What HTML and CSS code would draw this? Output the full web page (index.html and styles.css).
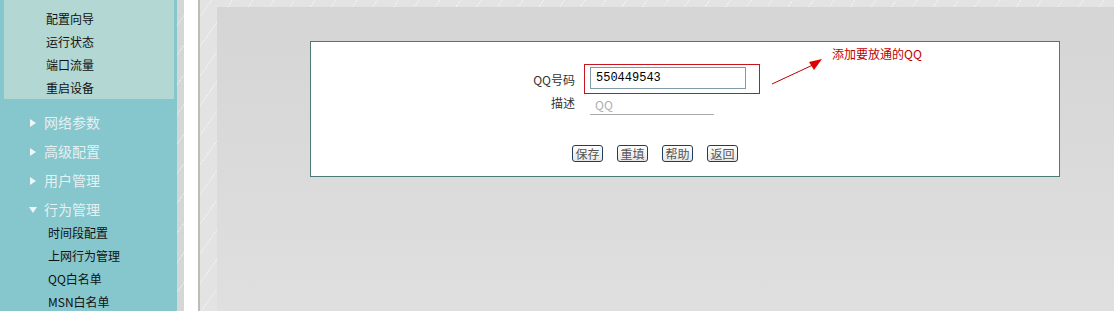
FILE: index.html
```html
<!DOCTYPE html>
<html lang="zh-CN">

<head>
    <meta charset="UTF-8">
    <title>QQ白名单</title>
    <link rel="stylesheet" href="styles.css">
</head>

<body>
    <div class="sidebar">
        <ul class="submenu boxed">
            <li>配置向导</li>
            <li>运行状态</li>
            <li>端口流量</li>
            <li>重启设备</li>
        </ul>
        <ul class="menu">
            <li><span class="arrow"></span>网络参数</li>
            <li><span class="arrow"></span>高级配置</li>
            <li><span class="arrow"></span>用户管理</li>
            <li><span class="arrow open"></span>行为管理</li>
        </ul>
        <ul class="submenu plain">
            <li>时间段配置</li>
            <li>上网行为管理</li>
            <li>QQ白名单</li>
            <li>MSN白名单</li>
        </ul>
    </div>

    <div class="divider">
        <div class="divider-gray"></div>
        <div class="divider-white"></div>
        <div class="divider-line"></div>
    </div>

    <div class="main">
        <div class="workspace">
            <div class="panel">
                <div class="form-row">
                    <label class="form-label">QQ号码</label>
                    <span class="highlight">
                        <input type="text" class="text-input" value="550449543">
                    </span>
                    <span class="note">
                        <svg class="note-arrow" width="60" height="34" viewBox="0 0 60 34">
                            <line x1="1" y1="30" x2="44" y2="10" stroke="#c00000" stroke-width="1" />
                            <polygon points="51,5 38,8 43,16" fill="#e00000" />
                        </svg>
                        <span class="note-text">添加要放通的QQ</span>
                    </span>
                </div>
                <div class="form-row second">
                    <label class="form-label">描述</label>
                    <input type="text" class="line-input" placeholder="QQ">
                </div>
                <div class="actions">
                    <button>保存</button>
                    <button>重填</button>
                    <button>帮助</button>
                    <button>返回</button>
                </div>
            </div>
        </div>
    </div>
</body>

</html>
```

FILE: styles.css
```css
body {
    margin: 0;
    display: flex;
    height: 311px;
    overflow: hidden;
    font-family: "Noto Sans CJK SC", "DejaVu Sans", sans-serif;
    font-size: 12px;
    color: #111;
    background-color: #d8d8d8;
}

ul {
    list-style: none;
    margin: 0;
    padding: 0;
}

.sidebar {
    width: 177px;
    flex-shrink: 0;
    background-color: #86c6cd;
}

.submenu li {
    line-height: 23px;
    height: 23px;
}

.submenu.boxed {
    margin-left: 4px;
    width: 170px;
    height: 99px;
    padding: 7px 0 0 42px;
    box-sizing: border-box;
    background-color: #b3d8d4;
}

.menu {
    margin-top: 9px;
}

.menu li {
    height: 29px;
    line-height: 29px;
    font-size: 14px;
    color: #e4f1f2;
    display: flex;
    align-items: center;
}

.arrow {
    width: 0;
    height: 0;
    margin-left: 30px;
    margin-right: 8px;
    border-top: 4px solid transparent;
    border-bottom: 4px solid transparent;
    border-left: 6px solid #eef7f7;
}

.arrow.open {
    margin-left: 29px;
    margin-right: 7px;
    border-left: 4px solid transparent;
    border-right: 4px solid transparent;
    border-top: 6px solid #eef7f7;
    border-bottom: none;
}

.submenu.plain {
    margin-top: -3px;
    padding-left: 48px;
}

.divider {
    display: flex;
    flex-shrink: 0;
}

.divider-gray,
.main {
    background-color: #e3e3e3;
    background-image: repeating-linear-gradient(-55deg, rgba(255, 255, 255, 0) 0 16px, rgba(255, 255, 255, 0.35) 16px 17px);
}

.divider-gray {
    width: 7px;
    background-color: #d6d6d6;
}

.divider-white {
    width: 14px;
    background-color: #fff;
}

.divider-line {
    width: 2px;
    background-color: #bdbdb6;
}

.main {
    flex: 1;
    padding: 7px 0 0 17px;
}

.workspace {
    height: 100%;
    background: linear-gradient(#d5d5d5, #dfdfdf);
    padding: 34px 54px 0 93px;
    box-sizing: border-box;
}

.panel {
    height: 136px;
    box-sizing: border-box;
    background-color: #fff;
    border: 1px solid #4c7a78;
    padding-top: 22px;
}

.form-row {
    display: flex;
    align-items: center;
    height: 30px;
}

.form-row.second {
    height: 21px;
    align-items: flex-end;
}

.form-label {
    width: 264px;
    text-align: right;
    color: #333;
    flex-shrink: 0;
    margin-right: 9px;
}

.form-row.second .form-label {
    margin-right: 15px;
    line-height: 21px;
    position: relative;
    top: -2px;
}

.highlight {
    display: inline-flex;
    border: 1px solid #c8141e;
    padding: 2px 13px 4px 5px;
}

.text-input {
    width: 156px;
    height: 22px;
    box-sizing: border-box;
    border: 1px solid #7f9aab;
    padding: 0 5px;
    font-family: "Liberation Mono", monospace;
    font-size: 12px;
    color: #000;
    outline: none;
}

.note {
    display: flex;
    align-items: flex-start;
    align-self: flex-start;
    margin-left: 11px;
    margin-top: -10px;
}

.note-text {
    color: #c00000;
    font-size: 12px;
    margin-left: 1px;
    line-height: 16px;
    margin-top: -8px;
}

.line-input {
    width: 124px;
    height: 20px;
    box-sizing: border-box;
    border: none;
    border-bottom: 1px solid #a8a8a8;
    padding: 0 5px;
    font-family: "Noto Sans CJK SC", sans-serif;
    font-size: 12px;
    outline: none;
}

.line-input::placeholder {
    color: #b0b0b0;
}

.actions {
    display: flex;
    gap: 14px;
    padding-left: 261px;
    margin-top: 30px;
}

.actions button {
    width: 31px;
    height: 17px;
    padding: 0;
    font-family: "Noto Sans CJK SC", sans-serif;
    font-size: 12px;
    line-height: 15px;
    color: #555;
    background: linear-gradient(#ffffff, #e6e6e6);
    border: 1px solid #1f3d5c;
    border-radius: 3px;
}
```
